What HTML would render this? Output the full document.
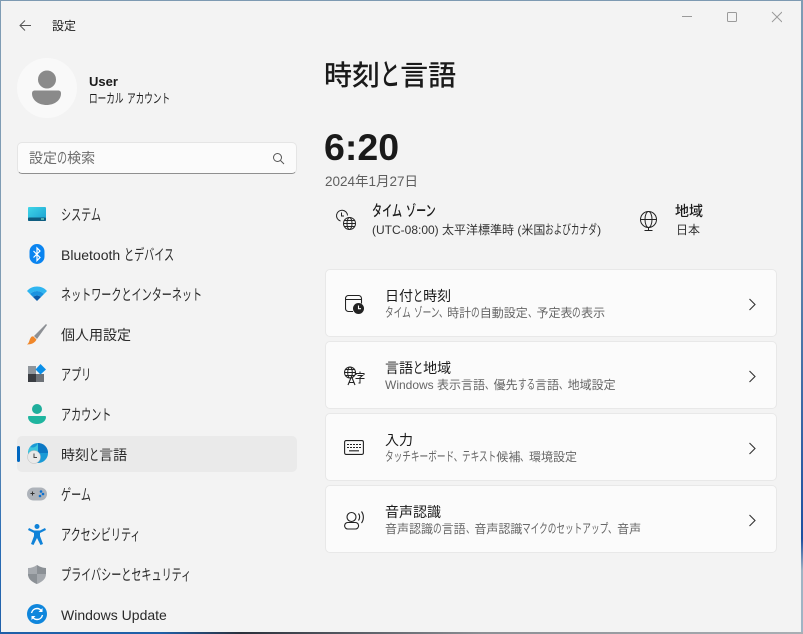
<!DOCTYPE html>
<html lang="ja"><head><meta charset="utf-8"><title>設定</title>
<style>
html,body{margin:0;padding:0;width:803px;height:634px;overflow:hidden;background:#7d9ab2}
body{position:relative;font-family:"Liberation Sans","Noto Sans CJK JP",sans-serif;color:#1b1b1b}
#bgl{position:absolute;left:0;top:0;width:1px;height:634px;background:linear-gradient(#7f9cb4 0,#7f9cb4 60%,#2a6db5 85%,#1f5fa8 100%)}
#bgr{position:absolute;left:801px;top:0;width:2px;height:634px;background:linear-gradient(#7f9cb4 0,#5f86ab 40%,#1d4fa0 85%,#9fb4c4 90%,#9fb4c4 100%)}
#bgb{position:absolute;left:0;top:632px;width:803px;height:2px;background:linear-gradient(90deg,#1f5fa8 0,#1f5fa8 20%,#2a2f3a 30%,#8b8f94 60%,#a9afb4 100%)}
#w{position:absolute;left:1px;top:1px;width:800px;height:631px;background:#f3f3f3}
.t{position:absolute;white-space:nowrap;line-height:1}
.a{position:absolute}
.k{display:inline-block;font-size:1.08em;line-height:.9;transform:scaleX(.667);transform-origin:0 50%;margin-right:calc(var(--n)*-.3333em)}
.m{font-size:14px;left:61px;color:#2a2a2a}
.card{position:absolute;left:325px;width:452px;height:68px;background:#fbfbfb;border:1px solid #e8e8e8;border-radius:5px;box-sizing:border-box}
.ct{font-size:14px;left:385px;color:#1b1b1b}
.cs{font-size:12px;left:385px;color:#666}
</style></head><body>
<div id="bgl"></div><div id="bgr"></div><div id="bgb"></div><div id="w"></div>

<svg class="a" style="left:19px;top:19px" width="13" height="13" viewBox="0 0 13 13" fill="none" stroke="#555" stroke-width="1"><path d="M12 6.500H1M6 1.500 1 6.500l5 5"/></svg>
<div class="t" style="left:52px;top:20px;font-size:12px">設定</div>

<svg class="a" style="left:682px;top:10px" width="100" height="14" viewBox="0 0 100 14" fill="none" stroke="#9a9a9a" stroke-width="1"><path d="M0 6.500H10"/><rect x="45.500" y="2.500" width="9" height="9" rx="1"/><path d="M90 2l10 10M100 2 90 12"/></svg>

<div class="a" style="left:17px;top:58px;width:60px;height:60px;border-radius:50%;background:#f9f9f9"></div>
<svg class="a" style="left:32px;top:70px" width="30" height="36" viewBox="0 0 30 36"><circle cx="15" cy="9.500" r="9" fill="#8a8a8a"/><path d="M3 20.500h23c2 0 3 1 3 3 0 7-7 11.500-14.500 11.500S0 30.500 0 23.500c0-2 1-3 3-3z" fill="#8a8a8a"/></svg>
<div class="t" style="left:89px;top:75px;font-size:13px;font-weight:bold;color:#1a1a1a">User</div>
<div class="t" style="left:89px;top:93px;font-size:12px;color:#1a1a1a"><span class="k" style="--n:4">ローカル</span> <span class="k" style="--n:5">アカウント</span></div>

<div class="a" style="left:17px;top:142px;width:280px;height:32px;box-sizing:border-box;background:#fbfbfb;border:1px solid #e5e5e5;border-bottom:1px solid #8f8f8f;border-radius:5px"></div>
<div class="t" style="left:29px;top:151px;font-size:14px;color:#6b6b6b">設定<span class="k" style="--n:1">の</span>検索</div>
<svg class="a" style="left:272px;top:152px" width="13" height="13" viewBox="0 0 13 13" fill="none" stroke="#555" stroke-width="1"><circle cx="5.500" cy="5.500" r="4"/><path d="M8.500 8.500 12 12"/></svg>

<div class="a" style="left:17px;top:436px;width:280px;height:36px;background:#eaeaea;border-radius:5px"></div>
<div class="a" style="left:17px;top:446px;width:3px;height:16px;background:#0067c0;border-radius:2px"></div>

<!-- sidebar icons -->
<svg class="a" style="left:28px;top:207px" width="18" height="15" viewBox="0 0 18 15"><defs><linearGradient id="g1" x1="0" y1="0" x2="1" y2="1"><stop offset="0" stop-color="#3fd6e8"/><stop offset="1" stop-color="#1a9fd0"/></linearGradient></defs><rect y="0" width="18" height="14" rx="1" fill="url(#g1)"/><rect y="10.500" width="18" height="3.500" rx="1" fill="#0f5d80"/><rect x="13" y="11.500" width="3" height="1" fill="#9fd"/></svg>
<svg class="a" style="left:29px;top:244px" width="16" height="21" viewBox="0 0 16 21"><rect width="15" height="20" x=".5" rx="7.500" fill="#0a84f0"/><path d="M4.500 7 11 13.500 8 16.500V4L11 7 4.500 13.500" fill="none" stroke="#fff" stroke-width="1.200"/></svg>
<svg class="a" style="left:27px;top:286px" width="20" height="16" viewBox="0 0 20 16"><path d="M0 5C5-1 15-1 20 5l-3 3C13 4 7 4 3 8z" fill="#2fb5f0"/><path d="M3 8c4-4 10-4 14 0l-3 3c-2.500-2-5.500-2-8 0z" fill="#1a93e0"/><path d="M6 11c2.500-2 5.500-2 8 0l-4 4z" fill="#0b5cab"/></svg>
<svg class="a" style="left:27px;top:324px" width="20" height="21" viewBox="0 0 20 21"><path d="M19 0 20 1 10 15 7 12z" fill="#8c8f94"/><path d="M6.500 12.500 9.500 15.500C8 19 4 20.500 0 20.500c2-1.500 2-3 3-5.500s2-3 3.500-2.500z" fill="#f0872a"/></svg>
<svg class="a" style="left:28px;top:364px" width="18" height="19" viewBox="0 0 18 19"><rect x="0" y="2" width="8" height="8" fill="#8f959b"/><rect x="0" y="10" width="8" height="8" fill="#3a3d42"/><rect x="8" y="10" width="8" height="8" fill="#6d7278"/><path d="M12.500 0 18 5.500 12.500 10.500 7.500 5.500z" fill="#0a8fe8"/></svg>
<svg class="a" style="left:28px;top:404px" width="18" height="21" viewBox="0 0 18 21"><circle cx="9" cy="5" r="5" fill="#1fae9c"/><path d="M1 12h16c.6 0 1 .4 1 1 0 4-4 7-9 7s-9-3-9-7c0-.6.4-1 1-1z" fill="#1fb59f"/></svg>
<svg class="a" style="left:27px;top:443px" width="21" height="21" viewBox="0 0 21 21"><circle cx="11" cy="10" r="10" fill="#1a9ad6"/><path d="M11 0a10 10 0 0 1 10 10H11z" fill="#0c78c4"/><path d="M3 4c3 1 6 1 8-4v10H1c0-2 1-4 2-6z" fill="#3fc5dc"/><circle cx="7" cy="14" r="6.500" fill="#e9e9e9" stroke="#bdbdbd" stroke-width=".5"/><path d="M7 10.500V14.500H10" fill="none" stroke="#444" stroke-width="1"/></svg>
<svg class="a" style="left:27px;top:487px" width="20" height="14" viewBox="0 0 20 14"><rect width="20" height="13" y=".5" rx="6.500" fill="#aeb3ba"/><path d="M3.500 6.500h4M5.500 4.500v4" stroke="#333" stroke-width="1"/><circle cx="14" cy="4.500" r="1.300" fill="#0a6fd0"/><circle cx="16" cy="7" r="1.300" fill="#0a6fd0"/><circle cx="13" cy="9" r="1.300" fill="#0a6fd0"/></svg>
<svg class="a" style="left:28px;top:524px" width="18" height="21" viewBox="0 0 18 21" fill="#0f82d8"><circle cx="9" cy="2.500" r="2.500"/><path d="M1 4 0 6l6 3v3L3 20l2.500 1L9 14l3.500 7L15 20l-3-8V9l6-3-1-2-5 2.500H6z"/></svg>
<svg class="a" style="left:28px;top:565px" width="18" height="19" viewBox="0 0 18 19"><path d="M9 0c3 2 6 3 9 3v6c0 5-4 8-9 10C4 17 0 14 0 9V3c3 0 6-1 9-3z" fill="#a5a9ae"/><path d="M9 0c3 2 6 3 9 3v6H9zM9 9H0c0 5 4 8 9 10z" fill="#8b9095"/></svg>
<svg class="a" style="left:27px;top:604px" width="20" height="20" viewBox="0 0 20 20"><circle cx="10" cy="10" r="10" fill="#0f86dc"/><path d="M4.500 9c.7-3 3-4.500 5.500-4.500 2 0 3.500 1 4.500 2.500M15.500 11c-.7 3-3 4.500-5.500 4.500-2 0-3.500-1-4.500-2.500" fill="none" stroke="#fff" stroke-width="1.400"/><path d="M15.500 4v4h-4zM4.500 16v-4h4z" fill="#fff"/></svg>

<div class="t m" style="top:208px"><span class="k" style="--n:4">システム</span></div>
<div class="t m" style="top:248px">Bluetooth <span class="k" style="--n:5">とデバイス</span></div>
<div class="t m" style="top:288px"><span class="k" style="--n:14">ネットワークとインターネット</span></div>
<div class="t m" style="top:328px">個人用設定</div>
<div class="t m" style="top:368px"><span class="k" style="--n:3">アプリ</span></div>
<div class="t m" style="top:408px"><span class="k" style="--n:5">アカウント</span></div>
<div class="t m" style="top:448px">時刻<span class="k" style="--n:1">と</span>言語</div>
<div class="t m" style="top:488px"><span class="k" style="--n:3">ゲーム</span></div>
<div class="t m" style="top:528px"><span class="k" style="--n:8">アクセシビリティ</span></div>
<div class="t m" style="top:568px"><span class="k" style="--n:13">プライバシーとセキュリティ</span></div>
<div class="t m" style="top:608px">Windows Update</div>

<!-- main -->
<div class="t" style="left:324px;top:62px;font-size:28px;font-weight:500;color:#1a1a1a">時刻<span class="k" style="--n:1">と</span>言語</div>
<div class="t" style="left:324px;top:129px;font-size:37.500px;font-weight:bold;color:#1a1a1a">6:20</div>
<div class="t" style="left:325px;top:175px;font-size:13.500px;color:#5f5f5f">2024年1月27日</div>

<svg class="a" style="left:335px;top:209px" width="22" height="22" viewBox="0 0 22 22" fill="none" stroke="#222" stroke-width="1"><path d="M5.500 12A5.500 5.500 0 1 1 12.500 6.500"/><path d="M6.500 3.500V7H9"/><circle cx="14.500" cy="14.500" r="6"/><ellipse cx="14.500" cy="14.500" rx="2.500" ry="6"/><path d="M8.500 14.500h12M9.500 11.500h10M9.500 17.500h10"/></svg>
<div class="t" style="left:372px;top:204px;font-size:14px;font-weight:500"><span class="k" style="--n:3">タイム</span> <span class="k" style="--n:3">ゾーン</span></div>
<div class="t" style="left:372px;top:224px;font-size:12px;color:#333">(UTC-08:00) 太平洋標準時 (米国<span class="k" style="--n:6">およびカナダ</span>)</div>

<svg class="a" style="left:639px;top:210px" width="19" height="21" viewBox="0 0 19 21" fill="none" stroke="#222" stroke-width="1"><circle cx="9.500" cy="9.500" r="8"/><ellipse cx="9.500" cy="9.500" rx="3.500" ry="8"/><path d="M1.500 9.500h16M9.500 17.500V20M5.500 20.500h8"/></svg>
<div class="t" style="left:675px;top:204px;font-size:14px;font-weight:500">地域</div>
<div class="t" style="left:676px;top:224px;font-size:12px;color:#333">日本</div>

<div class="card" style="top:269px"></div>
<div class="card" style="top:341px"></div>
<div class="card" style="top:413px"></div>
<div class="card" style="top:485px"></div>

<svg class="a" style="left:345px;top:295px" width="20" height="20" viewBox="0 0 20 20" fill="none" stroke="#222" stroke-width="1.100"><path d="M8 16.500H3.500a3 3 0 0 1-3-3V3.500a3 3 0 0 1 3-3h10a3 3 0 0 1 3 3v5M.5 4.500h16"/><circle cx="13.500" cy="13.500" r="5.500" fill="#222" stroke="none"/><path d="M13.500 10.500v3.200h2.500" stroke="#fff"/></svg>
<svg class="a" style="left:343px;top:366px" width="23" height="21" viewBox="0 0 23 21" fill="none" stroke="#222" stroke-width="1"><circle cx="7" cy="6.500" r="5.500"/><ellipse cx="7" cy="6.500" rx="2.300" ry="5.500"/><path d="M1.500 6.500h11M2 3.500h10M2 9.500h10"/><path d="M5 19 8.500 10.500 12 19M6.200 16.500h4.600" stroke-width="1.100" fill="#fbfbfb"/><path d="M13 9V7.500h8V9M17 5.500v2M14.500 9.500h5l-2.500 2V17h-1.500M12.500 12.500h9"/></svg>
<svg class="a" style="left:344px;top:440px" width="20" height="15" viewBox="0 0 20 15" fill="none" stroke="#222" stroke-width="1.100"><rect x=".6" y=".6" width="18.800" height="13.800" rx="1.500"/><path d="M3 4.500h2M6 4.500h2M9 4.500h2M12 4.500h2M15 4.500h2M3 7.500h2M6 7.500h2M9 7.500h2M12 7.500h2M15 7.500h2M5 10.800h10"/></svg>
<svg class="a" style="left:344px;top:511px" width="21" height="19" viewBox="0 0 21 19" fill="none" stroke="#222" stroke-width="1.100"><circle cx="7.500" cy="6" r="4.500"/><rect x=".6" y="11.500" width="14" height="6.500" rx="3.200"/><path d="M14.500 2.500c1.500 2 1.500 5 0 7M17.500 .5c2.500 3.500 2.500 8 0 11.500"/></svg>

<div class="t ct" style="top:289px">日付<span class="k" style="--n:1">と</span>時刻</div>
<div class="t cs" style="top:307px"><span class="k" style="--n:3">タイム</span> <span class="k" style="--n:4">ゾーン、</span>時計<span class="k" style="--n:1">の</span>自動設定<span class="k" style="--n:1">、</span>予定表<span class="k" style="--n:1">の</span>表示</div>
<div class="t ct" style="top:361px">言語<span class="k" style="--n:1">と</span>地域</div>
<div class="t cs" style="top:379px">Windows 表示言語<span class="k" style="--n:1">、</span>優先<span class="k" style="--n:2">する</span>言語<span class="k" style="--n:1">、</span>地域設定</div>
<div class="t ct" style="top:433px">入力</div>
<div class="t cs" style="top:451px"><span class="k" style="--n:9">タッチキーボード、</span><span class="k" style="--n:4">テキスト</span>候補<span class="k" style="--n:1">、</span>環境設定</div>
<div class="t ct" style="top:505px">音声認識</div>
<div class="t cs" style="top:523px">音声認識<span class="k" style="--n:1">の</span>言語<span class="k" style="--n:1">、</span>音声認識<span class="k" style="--n:10">マイクのセットアップ</span><span class="k" style="--n:1">、</span>音声</div>

<svg class="a" style="left:748px;top:298px" width="9" height="13" viewBox="0 0 9 13" fill="none" stroke="#333" stroke-width="1.100"><path d="M1.500 1 7 6.500 1.500 12"/></svg>
<svg class="a" style="left:748px;top:370px" width="9" height="13" viewBox="0 0 9 13" fill="none" stroke="#333" stroke-width="1.100"><path d="M1.500 1 7 6.500 1.500 12"/></svg>
<svg class="a" style="left:748px;top:442px" width="9" height="13" viewBox="0 0 9 13" fill="none" stroke="#333" stroke-width="1.100"><path d="M1.500 1 7 6.500 1.500 12"/></svg>
<svg class="a" style="left:748px;top:514px" width="9" height="13" viewBox="0 0 9 13" fill="none" stroke="#333" stroke-width="1.100"><path d="M1.500 1 7 6.500 1.500 12"/></svg>
</body></html>
